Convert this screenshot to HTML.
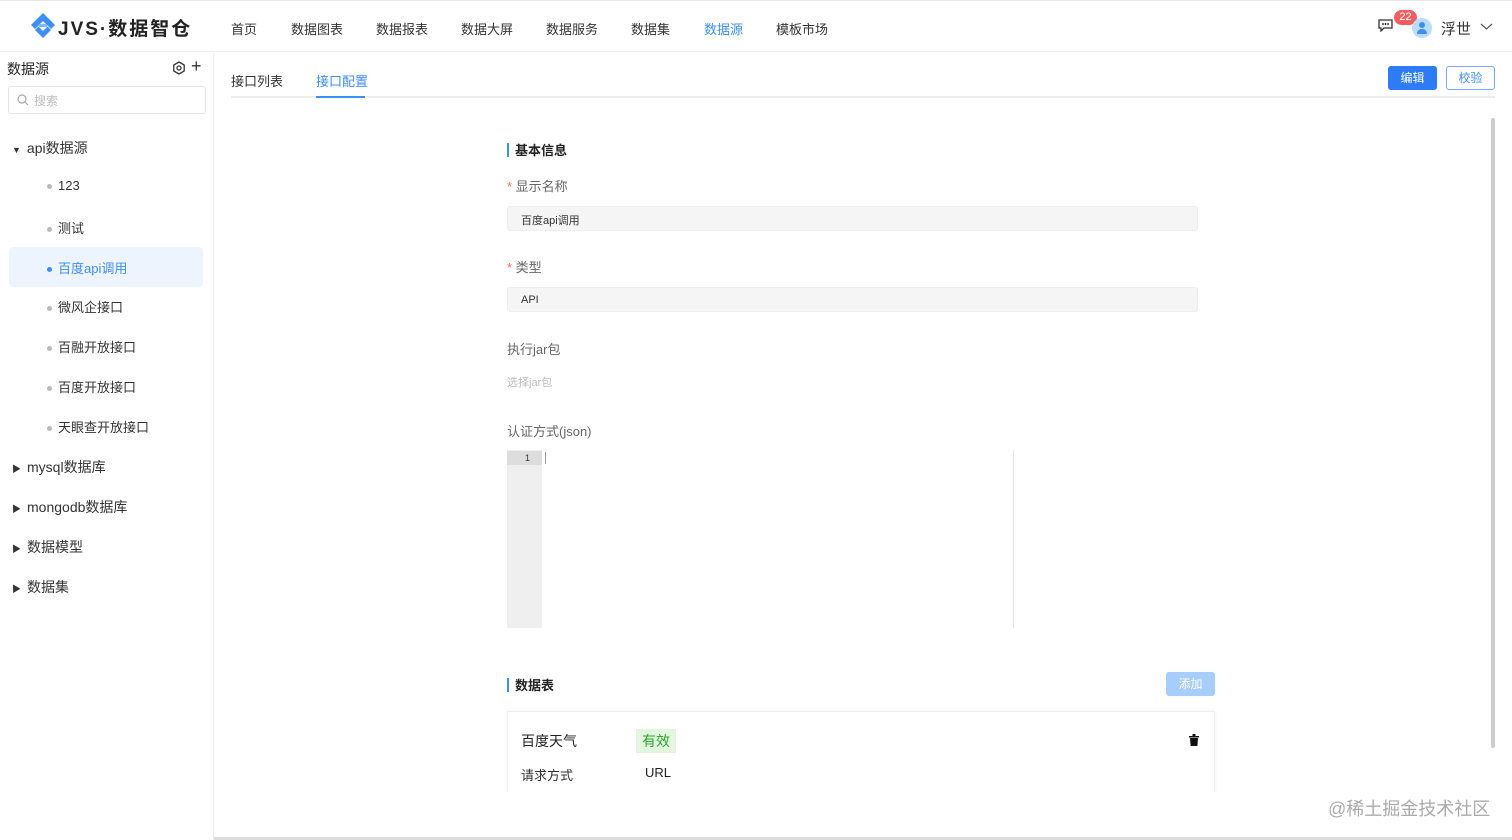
<!DOCTYPE html>
<html><head><meta charset="utf-8"><style>
*{margin:0;padding:0;box-sizing:border-box}
body{width:1512px;height:840px;overflow:hidden;background:#fff;font-family:"Liberation Sans","Noto Sans CJK SC",sans-serif;color:#333;position:relative}
.a{position:absolute;white-space:nowrap}
.nav{font-size:13px;color:#333;top:19px}
.tree{font-size:13px;color:#333}
.dot{display:inline-block;width:5px;height:5px;border-radius:50%;background:#bbb;margin-right:6px;vertical-align:middle}
.tri{font-size:9px;margin-right:6px;color:#333}
.lbl{font-size:13px;color:#666}
.inp{background:#f5f5f5;border:1px solid #eee;border-radius:3px;height:25px;font-size:11px;padding:5px 13px;color:#333}
</style></head><body>
<div class="a" style="left:0;top:0;width:1512px;height:52px;border-bottom:1px solid #eee;border-top:1px solid #e8e8e8"></div>
<svg class="a" style="left:30px;top:12px" width="26" height="26" viewBox="0 0 26 26"><path d="M13 1L1 13l4 4 8-8 8 8 4-4z" fill="#3f8ef5"/><path d="M5 18l8 8 8-8-3.5-3.5L13 19l-4.5-4.5z" fill="#3f8ef5"/><path d="M9 12h8v3H9z" fill="#7cb8ff"/></svg>
<div class="a" style="left:58px;top:14px;font-size:19px;font-weight:bold;letter-spacing:2px;color:#222">JVS·数据智仓</div>
<div class="a nav" style="left:231px">首页</div>
<div class="a nav" style="left:291px">数据图表</div>
<div class="a nav" style="left:376px">数据报表</div>
<div class="a nav" style="left:461px">数据大屏</div>
<div class="a nav" style="left:546px">数据服务</div>
<div class="a nav" style="left:631px">数据集</div>
<div class="a nav" style="left:704px;color:#3f8ef5">数据源</div>
<div class="a nav" style="left:776px">模板市场</div>
<svg class="a" style="left:1378px;top:19px" width="15" height="13" viewBox="0 0 15 13"><path d="M1 1h13v8H6l-3 3V9H1z" fill="none" stroke="#333" stroke-width="1.3"/><circle cx="5" cy="5" r=".9"/><circle cx="7.5" cy="5" r=".9"/><circle cx="10" cy="5" r=".9"/></svg>
<div class="a" style="left:1394px;top:10px;width:23px;height:15px;border-radius:8px;background:#f06060;color:#fff;font-size:11px;text-align:center;line-height:15px">22</div>
<div class="a" style="left:1412px;top:18px;width:20px;height:20px;border-radius:50%;background:#bcdcff"></div>
<svg class="a" style="left:1415px;top:20px" width="14" height="15" viewBox="0 0 14 15"><circle cx="7" cy="5" r="3" fill="#3f8ef5"/><path d="M2 14c0-4 3-5 5-5s5 1 5 5z" fill="#3f8ef5"/></svg>
<div class="a" style="left:1441px;top:18px;font-size:15px">浮世</div>
<svg class="a" style="left:1480px;top:23px" width="13" height="8"><path d="M1 1l5.5 5L12 1" fill="none" stroke="#555" stroke-width="1.2"/></svg>
<div class="a" style="left:213px;top:53px;width:1px;height:787px;background:#eee"></div>
<div class="a" style="left:7px;top:59px;font-size:14px;color:#222">数据源</div>
<svg class="a" style="left:172px;top:61px" width="14" height="14" viewBox="0 0 14 14"><path d="M7 1l5.2 3v6L7 13l-5.2-3V4z" fill="none" stroke="#333" stroke-width="1.3"/><circle cx="7" cy="7" r="2" fill="none" stroke="#333" stroke-width="1.3"/></svg>
<div class="a" style="left:191px;top:56px;font-size:18px;color:#333">+</div>
<div class="a" style="left:8px;top:86px;width:198px;height:28px;border:1px solid #e6e6e6;border-radius:3px"></div>
<svg class="a" style="left:17px;top:94px" width="12" height="12"><circle cx="5" cy="5" r="4" fill="none" stroke="#aaa" stroke-width="1.2"/><path d="M8 8l3 3" stroke="#aaa" stroke-width="1.2"/></svg>
<div class="a" style="left:34px;top:92px;font-size:12px;color:#bbb">搜索</div>
<div class="a tree" style="left:12px;top:138px;font-size:14px"><span class="tri">▼</span>api数据源</div>
<div class="a tree" style="left:47px;top:178px"><span class="dot"></span>123</div>
<div class="a tree" style="left:47px;top:218px"><span class="dot"></span>测试</div>
<div class="a" style="left:9px;top:247px;width:194px;height:40px;background:#eef4fd;border-radius:4px"></div>
<div class="a tree" style="left:47px;top:258px;color:#3f8ef5"><span class="dot" style="background:#3f8ef5"></span>百度api调用</div>
<div class="a tree" style="left:47px;top:297px"><span class="dot"></span>微风企接口</div>
<div class="a tree" style="left:47px;top:337px"><span class="dot"></span>百融开放接口</div>
<div class="a tree" style="left:47px;top:377px"><span class="dot"></span>百度开放接口</div>
<div class="a tree" style="left:47px;top:417px"><span class="dot"></span>天眼查开放接口</div>
<div class="a tree" style="left:12px;top:457px;font-size:14px"><span class="tri">▶</span>mysql数据库</div>
<div class="a tree" style="left:12px;top:497px;font-size:14px"><span class="tri">▶</span>mongodb数据库</div>
<div class="a tree" style="left:12px;top:537px;font-size:14px"><span class="tri">▶</span>数据模型</div>
<div class="a tree" style="left:12px;top:577px;font-size:14px"><span class="tri">▶</span>数据集</div>
<div class="a" style="left:231px;top:71px;font-size:13px">接口列表</div>
<div class="a" style="left:316px;top:71px;font-size:13px;color:#3f8ef5">接口配置</div>
<div class="a" style="left:231px;top:96px;width:1264px;height:2px;background:#eee"></div>
<div class="a" style="left:316px;top:96px;width:49px;height:2px;background:#3f8ef5"></div>
<div class="a" style="left:1388px;top:66px;width:49px;height:24px;background:#2d7cf6;border-radius:3px;color:#fff;font-size:12px;text-align:center;line-height:24px">编辑</div>
<div class="a" style="left:1446px;top:66px;width:49px;height:24px;border:1px solid #7aaaf5;border-radius:3px;color:#3f8ef5;font-size:12px;text-align:center;line-height:22px">校验</div>
<div class="a" style="left:1491px;top:118px;width:4px;height:630px;background:#ccc;border-radius:2px"></div>
<div class="a" style="left:507px;top:143px;width:2px;height:14px;background:#3f8ef5"></div>
<div class="a" style="left:515px;top:140px;font-size:13px;font-weight:bold;color:#222">基本信息</div>
<div class="a lbl" style="left:507px;top:176px"><span style="color:#f56c6c">* </span>显示名称</div>
<div class="a inp" style="left:507px;top:206px;width:691px">百度api调用</div>
<div class="a lbl" style="left:507px;top:257px"><span style="color:#f56c6c">* </span>类型</div>
<div class="a inp" style="left:507px;top:287px;width:691px;padding-top:6px">API</div>
<div class="a lbl" style="left:507px;top:339px">执行jar包</div>
<div class="a" style="left:507px;top:374px;font-size:11px;color:#bbb">选择jar包</div>
<div class="a lbl" style="left:507px;top:421px">认证方式(json)</div>
<div class="a" style="left:507px;top:450px;width:35px;height:178px;background:#efefef"></div>
<div class="a" style="left:507px;top:451px;width:35px;height:14px;background:#ddd;font-size:9px;text-align:right;padding-right:12px;line-height:14px">1</div>
<div class="a" style="left:545px;top:452px;width:1px;height:12px;background:#999"></div>
<div class="a" style="left:1013px;top:450px;width:1px;height:178px;background:#e5e5e5"></div>
<div class="a" style="left:507px;top:678px;width:2px;height:14px;background:#3f8ef5"></div>
<div class="a" style="left:515px;top:675px;font-size:13px;font-weight:bold;color:#222">数据表</div>
<div class="a" style="left:1166px;top:672px;width:49px;height:24px;background:#a7cdfb;border-radius:3px;color:#fff;font-size:12px;text-align:center;line-height:24px">添加</div>
<div class="a" style="left:507px;top:711px;width:708px;height:85px;border:1px solid #eee;border-bottom:none;box-shadow:0 0 4px rgba(0,0,0,.06)"></div>
<div class="a" style="left:521px;top:731px;font-size:14px;color:#222">百度天气</div>
<div class="a" style="left:636px;top:729px;width:40px;height:24px;background:#e2f6df;color:#2ea32e;font-size:14px;text-align:center;line-height:24px">有效</div>
<svg class="a" style="left:1189px;top:734px" width="10" height="12" viewBox="0 0 10 12"><path d="M0 2h10v1.5H0zM3.5 0h3v2h-3zM1 4h8l-.6 8H1.6z" fill="#111"/></svg>
<div class="a" style="left:521px;top:765px;font-size:13px;color:#333">请求方式</div>
<div class="a" style="left:645px;top:765px;font-size:13px;color:#222">URL</div>
<div class="a" style="left:214px;top:792px;width:1298px;height:48px;background:#fff"></div>
<div class="a" style="left:214px;top:837px;width:1298px;height:3px;background:#ddd"></div>
<div class="a" style="left:1328px;top:795px;font-size:18px;color:#aaa">@稀土掘金技术社区</div>
</body></html>
